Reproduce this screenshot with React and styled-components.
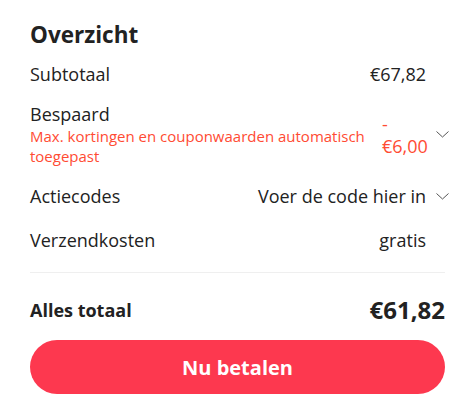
import React from "react";
import styled, { createGlobalStyle } from "styled-components";

const GlobalStyle = createGlobalStyle`
  body {
    margin: 0;
    background: #fff;
    font-family: "Open Sans", "Liberation Sans", sans-serif;
    color: #222;
  }
`;

const Chevron = () => (
  <svg width="13" height="7" viewBox="0 0 13 7" fill="none">
    <path d="M0.5 0.5 L6.5 6 L12.5 0.5" stroke="#555" strokeWidth="1" />
  </svg>
);

const rows = [
  { label: "Subtotaal", value: "€67,82", space: 0 },
  {
    label: "Bespaard",
    note: "Max. kortingen en couponwaarden automatisch toegepast",
    value: "-€6,00",
    red: true,
    chevron: true,
    space: 18,
  },
  { label: "Actiecodes", value: "Voer de code hier in", chevron: true, space: 19 },
  { label: "Verzendkosten", value: "gratis", space: 22 },
];

const App = () => {
  return (
    <>
      <GlobalStyle />
      <Panel>
        <Title>Overzicht</Title>
        <Rows>
          {rows.map((row) => (
            <Row key={row.label} space={row.space}>
              <LabelCol>
                <Label>{row.label}</Label>
                {row.note && <Note>{row.note}</Note>}
              </LabelCol>
              <Value red={row.red} narrow={!!row.note}>
                {row.value}
              </Value>
              <IconSlot>{row.chevron && <Chevron />}</IconSlot>
            </Row>
          ))}
        </Rows>
        <Divider />
        <TotalRow>
          <TotalLabel>Alles totaal</TotalLabel>
          <TotalValue>€61,82</TotalValue>
        </TotalRow>
        <PayButton>Nu betalen</PayButton>
      </Panel>
    </>
  );
};

export default App;

const Panel = styled.div`
  width: 464px;
  height: 412px;
  box-sizing: border-box;
  padding: 20px 19px 0 30px;
  display: flex;
  flex-direction: column;
`;

const Title = styled.div`
  font-size: 22.5px;
  font-weight: 700;
  line-height: 30px;
  color: #222;
`;

const Rows = styled.div`
  display: flex;
  flex-direction: column;
  margin-top: 13px;
  margin-right: -4px;
`;

const Row = styled.div`
  display: flex;
  align-items: center;
  margin-top: ${(p) => p.space}px;
`;

const LabelCol = styled.div`
  flex: 1;
  min-width: 0;
  display: flex;
  flex-direction: column;
`;

const Label = styled.div`
  font-size: 18px;
  line-height: 22px;
`;

const Note = styled.div`
  font-size: 15px;
  line-height: 20px;
  padding-top: 1px;
  padding-right: 12px;
  color: #ff4b33;
`;

const Value = styled.div`
  font-size: 18px;
  line-height: 22px;
  text-align: left;
  color: ${(p) => (p.red ? "#ff4b33" : "#222")};
  width: ${(p) => (p.narrow ? "44px" : "auto")};
  flex-shrink: 0;
`;

const IconSlot = styled.div`
  width: 23px;
  flex-shrink: 0;
  display: flex;
  justify-content: flex-end;
  align-items: center;
`;

const Divider = styled.div`
  height: 1px;
  background: #efefef;
  margin-top: 21px;
`;

const TotalRow = styled.div`
  display: flex;
  align-items: center;
  justify-content: space-between;
  height: 32px;
  margin-top: 21px;
`;

const TotalLabel = styled.div`
  font-size: 18px;
  font-weight: 700;
  line-height: 26px;
`;

const TotalValue = styled.div`
  font-size: 24px;
  font-weight: 700;
  line-height: 32px;
`;

const PayButton = styled.button`
  margin-top: 14px;
  height: 54px;
  border: none;
  border-radius: 27px;
  background: #fd384f;
  color: #fff;
  font-family: "Open Sans", "Liberation Sans", sans-serif;
  font-size: 20px;
  font-weight: 700;
  cursor: pointer;
`;
